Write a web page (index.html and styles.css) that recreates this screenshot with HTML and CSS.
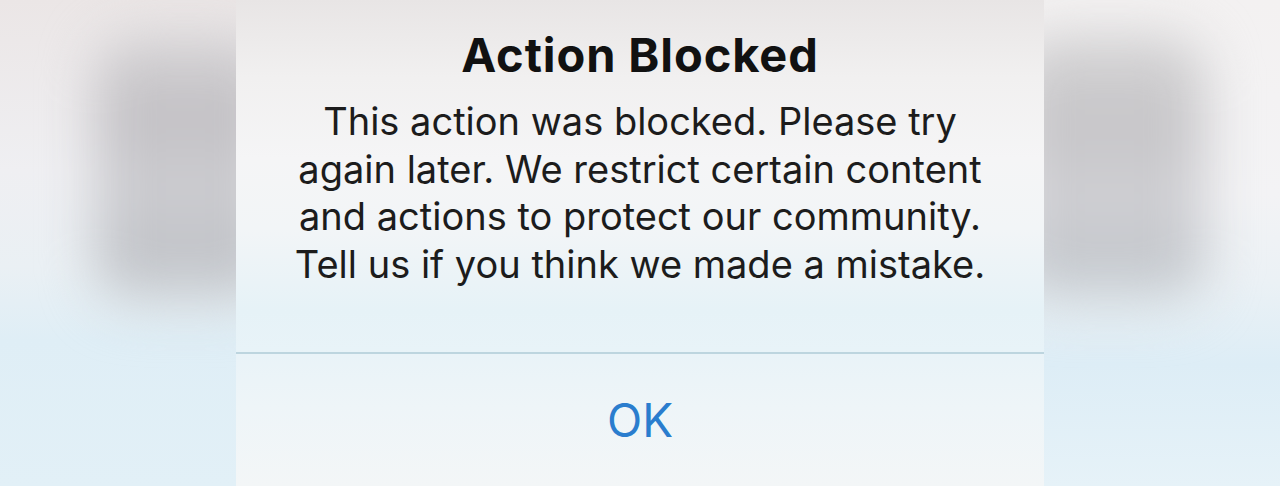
FILE: index.html
```html
<!DOCTYPE html>
<html lang="en">
<head>
<meta charset="utf-8">
<title>Action Blocked</title>
<link rel="stylesheet" href="styles.css">
</head>
<body>
<div class="screen">
  <div class="side side-left">
    <div class="blob blob-left"></div>
  </div>
  <div class="dialog">
    <div class="dialog-body">
      <h1 class="title">Action Blocked</h1>
      <p class="message">This action was blocked. Please try<br>again later. We restrict certain content<br>and actions to protect our community.<br>Tell us if you think we made a mistake.</p>
    </div>
    <div class="divider"></div>
    <div class="dialog-actions">
      <span class="ok">OK</span>
    </div>
  </div>
  <div class="side side-right">
    <div class="blob blob-right"></div>
  </div>
</div>
</body>
</html>
```

FILE: styles.css
```css
* { box-sizing: border-box; }
html, body { margin: 0; padding: 0; }
body {
  width: 1280px;
  height: 486px;
  overflow: hidden;
  font-family: "Inter", "Liberation Sans", sans-serif;
  background: #eef2f5;
}
.screen {
  display: flex;
  width: 1280px;
  height: 486px;
}
.side {
  width: 236px;
  height: 486px;
  overflow: hidden;
  background: linear-gradient(180deg, #ebe6e6 0%, #efeff2 35%, #eaf0f4 55%, #dfeef6 70%, #e2f0f7 100%);
  padding-top: 36px;
}
.side-right {
  width: 236px;
  background: linear-gradient(180deg, #f3f1f1 0%, #f3f3f5 40%, #ebf1f5 58%, #ddedf6 75%, #e6f2f8 100%);
}
.blob {
  height: 270px;
  filter: blur(26px);
  border-radius: 40px;
}
.blob-left {
  margin-left: 95px;
  margin-right: -40px;
  background: linear-gradient(180deg, #d4d2d4 0%, #c2c0c4 30%, #cdcdd1 55%, #bfc1c6 85%, #d8dfe3 100%);
}
.blob-right {
  margin-left: -30px;
  margin-right: 75px;
  background: linear-gradient(180deg, #d3d2d3 0%, #c6c5c8 35%, #d0d0d4 60%, #c2c5ca 85%, #d8e1e6 100%);
}
.dialog {
  width: 808px;
  height: 486px;
  display: flex;
  flex-direction: column;
  background: #f3f4f5;
}
.dialog-body {
  height: 352px;
  padding-top: 28px;
  text-align: center;
  background: linear-gradient(180deg, #e8e5e5 0%, #f1f0f0 22%, #f5f5f6 45%, #f2f5f7 65%, #e6f2f7 88%, #e8f3f8 100%);
}
.title {
  margin: 0;
  font-size: 47px;
  line-height: 54px;
  font-weight: 700;
  color: #111111;
  letter-spacing: 0.9px;
}
.message {
  margin: 16px 0 0;
  font-size: 38px;
  line-height: 47.7px;
  font-weight: 400;
  color: #1c1c1c;
}
.divider {
  height: 2px;
  background: #bdd5df;
}
.dialog-actions {
  flex: 1;
  display: flex;
  align-items: center;
  justify-content: center;
  background: linear-gradient(180deg, #e9f3f8 0%, #eef5f8 40%, #f3f6f7 100%);
}
.ok {
  font-size: 46px;
  line-height: 54px;
  color: #2a7dce;
  font-weight: 400;
}
```
